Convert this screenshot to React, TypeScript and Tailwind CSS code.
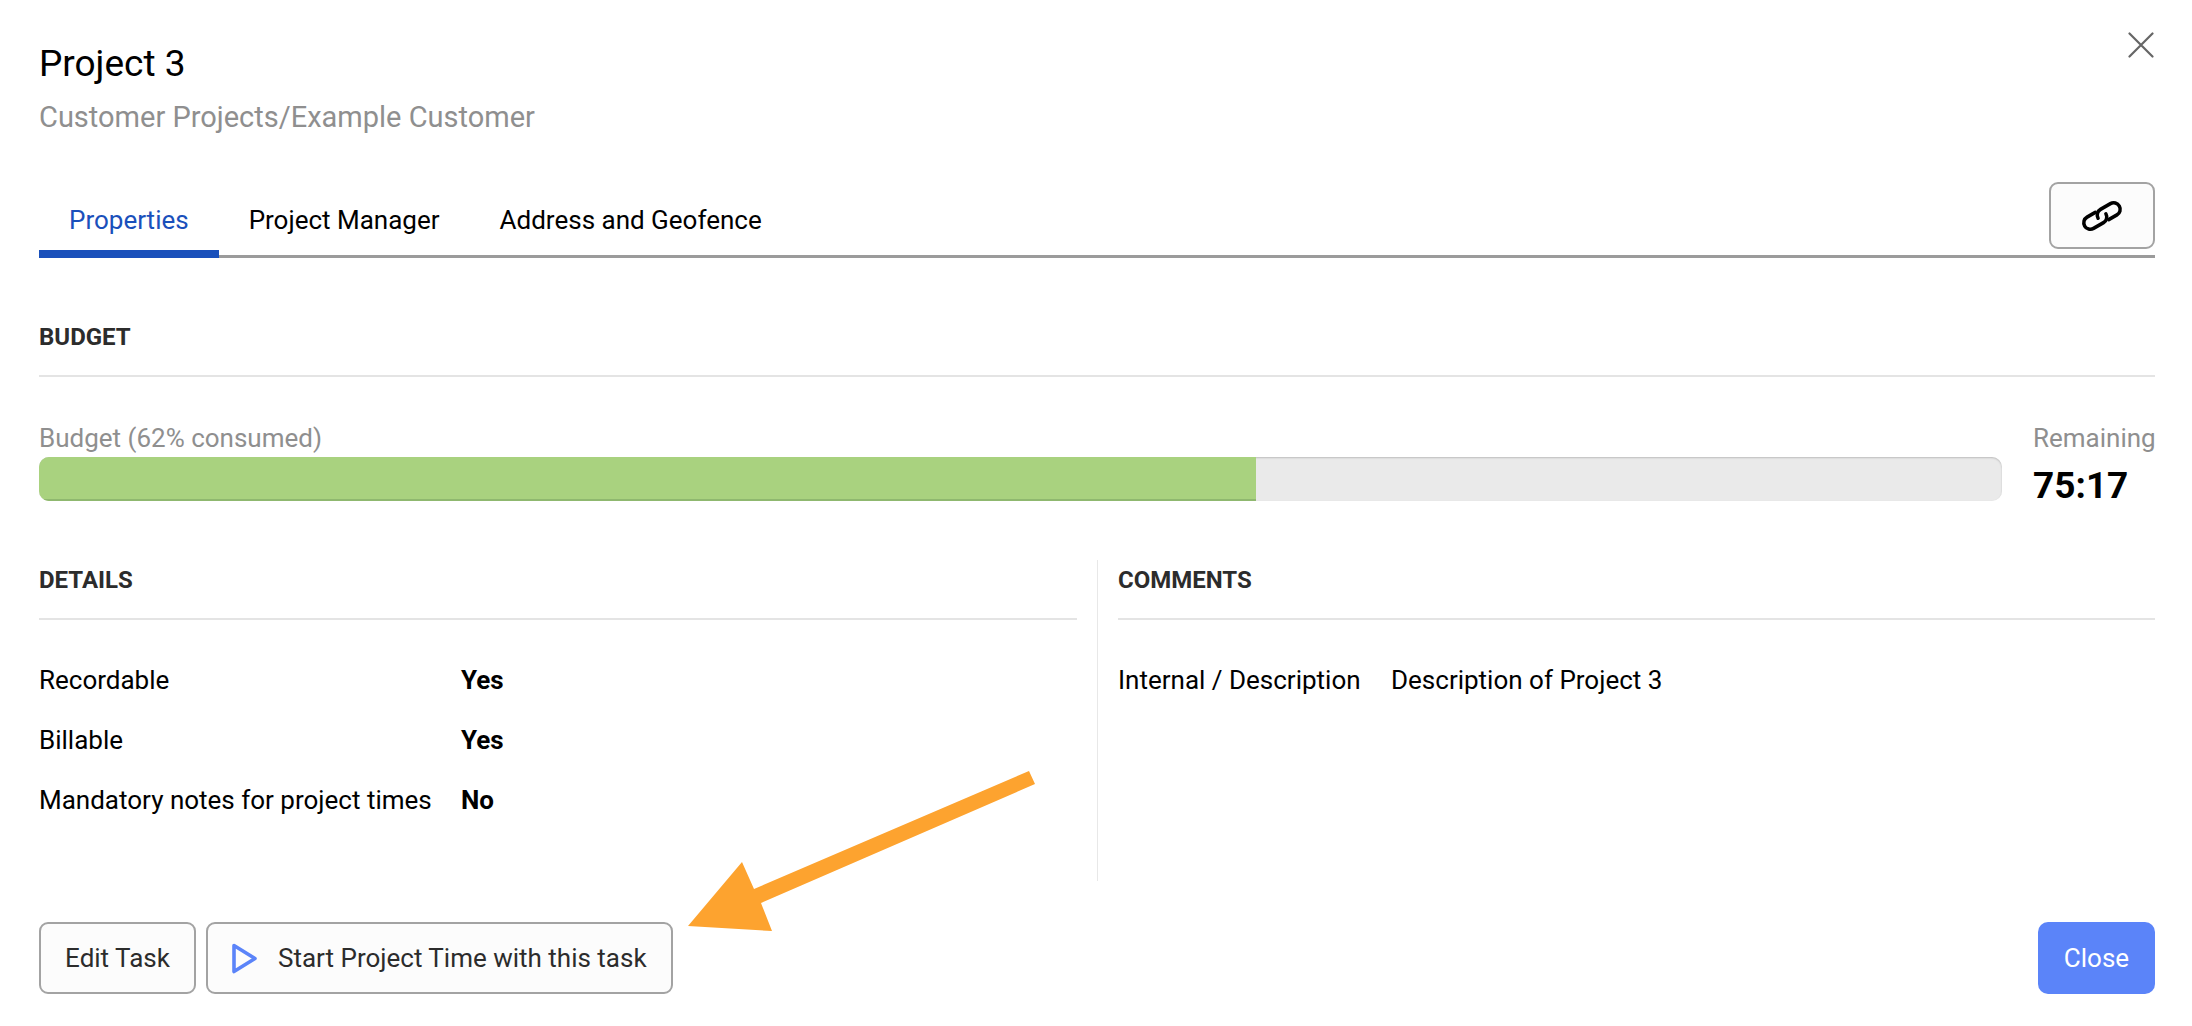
import React from "react";

function SectionHead({ children }: { children: React.ReactNode }) {
  return (
    <div className="h-[54px] border-b-2 border-[#e4e4e4] text-[24px] leading-[28px] font-bold text-[#2c2c2c]">
      {children}
    </div>
  );
}

function Row({ label, value }: { label: string; value: string }) {
  return (
    <div className="flex h-[60px] items-center text-[26px] text-black">
      <div className="w-[422px]">{label}</div>
      <div className="font-bold">{value}</div>
    </div>
  );
}

function LinkIcon() {
  return (
    <svg className="mt-[1px]" width="44" height="34" viewBox="0 0 44 34" fill="none" stroke="#000" strokeWidth="3.5" strokeLinecap="round">
      <g transform="rotate(-30 22 17)">
        <path d="M18 10.5 H8.5 A6.5 6.5 0 0 0 8.5 23.5 H20 A6.5 6.5 0 0 0 26.5 17" />
        <path d="M26 23.5 H35.5 A6.5 6.5 0 0 0 35.5 10.5 H24 A6.5 6.5 0 0 0 17.5 17" />
      </g>
    </svg>
  );
}

export default function App() {
  return (
    <div className="relative h-[1026px] w-[2192px] overflow-hidden bg-white pl-[39px] pr-[37px] font-['Roboto',sans-serif]">
      <div className="flex justify-between pt-[42px]">
        <div>
          <div className="h-[44px] text-[37px] leading-[44px] text-black">Project 3</div>
          <div className="mt-[9px] text-[29px] leading-[44px] text-[#8f8f8f]">Customer Projects/Example Customer</div>
        </div>
        <svg className="-mt-[10px] mr-[1px]" width="26" height="26" viewBox="0 0 26 26" stroke="#666666" strokeWidth="2.2" strokeLinecap="round">
          <path d="M1.5 1.5 L24.5 24.5 M24.5 1.5 L1.5 24.5" />
        </svg>
      </div>

      <div className="mt-[40px] flex h-[79px] items-end justify-between border-b-[3px] border-[#9b9b9b]">
        <div className="flex items-start text-[26px] leading-[30px] text-black">
          <div className="-mb-[3px] h-[68px] border-b-[8px] border-[#1a50bb] px-[30px] pt-[15px] text-[#1a50bb]">Properties</div>
          <div className="h-[65px] px-[30px] pt-[15px]">Project Manager</div>
          <div className="h-[65px] px-[30px] pt-[15px]">Address and Geofence</div>
        </div>
        <button className="mb-[6px] flex h-[67px] w-[106px] items-center justify-center rounded-[9px] border-2 border-[#a3a3a3] bg-[#fcfcfc]">
          <LinkIcon />
        </button>
      </div>

      <div className="mt-[65px]">
        <SectionHead>BUDGET</SectionHead>
      </div>

      <div className="mt-[46px] flex justify-between">
        <div className="w-[1963px]">
          <div className="text-[26px] leading-[30px] text-[#8f8f8f]">Budget (62% consumed)</div>
          <div className="mt-[4px] flex h-[44px] overflow-hidden rounded-[10px] bg-[#eaeaea] shadow-[inset_0_1px_2px_rgba(0,0,0,0.2)]">
            <div className="w-[1217px] border-b-2 border-[#8fb86f] bg-[#a9d27f]" />
          </div>
        </div>
        <div className="w-[122px]">
          <div className="text-[26px] leading-[30px] text-[#8f8f8f]">Remaining</div>
          <div className="mt-[11px] text-[37px] leading-[44px] font-bold text-black">75:17</div>
        </div>
      </div>

      <div className="mt-[52px] flex h-[321px]">
        <div className="w-[1038px] pt-[6px]">
          <SectionHead>DETAILS</SectionHead>
          <div className="mt-[30px]">
            <Row label="Recordable" value="Yes" />
            <Row label="Billable" value="Yes" />
            <Row label="Mandatory notes for project times" value="No" />
          </div>
        </div>
        <div className="ml-[20px] h-[321px] border-l border-[#e8e8e8]" />
        <div className="ml-[20px] flex-1 pt-[6px]">
          <SectionHead>COMMENTS</SectionHead>
          <div className="mt-[30px] flex h-[60px] items-center text-[26px] text-black">
            <div className="w-[273px]">Internal / Description</div>
            <div>Description of Project 3</div>
          </div>
        </div>
      </div>

      <div className="mt-[41px] flex justify-between text-[26px]">
        <div className="flex gap-[10px] text-[#2c2c2c]">
          <button className="h-[72px] w-[157px] rounded-[9px] border-2 border-[#a3a3a3] bg-[#fcfcfc]">Edit Task</button>
          <button className="flex h-[72px] w-[467px] items-center rounded-[9px] border-2 border-[#a3a3a3] bg-[#fcfcfc] pl-[24px]">
            <svg width="25" height="31" viewBox="0 0 25 31" fill="none" stroke="#5b84f9" strokeWidth="3.6" strokeLinejoin="round">
              <path d="M2 2.5 L23 15.5 L2 28.5 Z" />
            </svg>
            <span className="ml-[21px]">Start Project Time with this task</span>
          </button>
        </div>
        <button className="h-[72px] w-[117px] rounded-[10px] bg-[#5b84f9] text-white">Close</button>
      </div>

      <svg className="absolute left-0 top-0" width="2192" height="1026" fill="#fda32f">
        <polygon points="688,926 742,862 754,889 1029,771 1035,784 761,903 772,931" />
      </svg>
    </div>
  );
}
